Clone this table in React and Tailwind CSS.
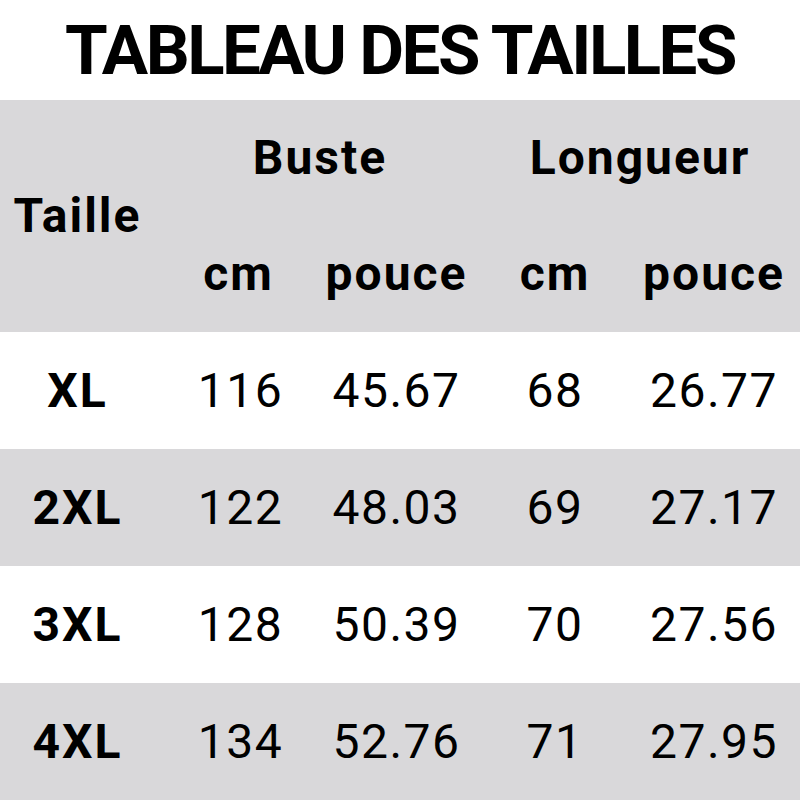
const rows = [
  { size: "XL", bustCm: "116", bustIn: "45.67", lenCm: "68", lenIn: "26.77" },
  { size: "2XL", bustCm: "122", bustIn: "48.03", lenCm: "69", lenIn: "27.17" },
  { size: "3XL", bustCm: "128", bustIn: "50.39", lenCm: "70", lenIn: "27.56" },
  { size: "4XL", bustCm: "134", bustIn: "52.76", lenCm: "71", lenIn: "27.95" },
];

const cols = "grid grid-cols-[155px_163px_157px_160px_158px]";

export default function App() {
  return (
    <div
      className="w-[800px] h-[800px] bg-white text-black overflow-hidden"
      style={{ fontFamily: "Roboto, 'Liberation Sans', sans-serif" }}
    >
      {/* Title */}
      <div className="h-[100px] flex items-center justify-center">
        <h1 className="text-[69px] font-bold leading-none tracking-[-2.5px]">TABLEAU DES TAILLES</h1>
      </div>

      {/* Header */}
      <div className={`${cols} h-[232px] bg-[#d9d8da] font-bold text-[48px] leading-none tracking-[2px]`}>
        <div className="row-span-2 flex items-center justify-center">Taille</div>
        <div className="col-span-2 flex items-center justify-center pl-[10px]">Buste</div>
        <div className="col-span-2 flex items-center justify-center pl-[12px]">Longueur</div>
        <div className="flex items-center justify-center pl-[4px]">cm</div>
        <div className="flex items-center justify-center">pouce</div>
        <div className="flex items-center justify-center">cm</div>
        <div className="flex items-center justify-center">pouce</div>
      </div>

      {/* Rows */}
      {rows.map((r, i) => (
        <div
          key={r.size}
          className={`${cols} h-[117px] text-[48px] leading-none tracking-[1.5px] ${i % 2 === 1 ? "bg-[#d9d8da]" : "bg-white"}`}
        >
          <div className="flex items-center justify-center font-bold tracking-[2px]">{r.size}</div>
          <div className="flex items-center justify-center pl-[8px]">{r.bustCm}</div>
          <div className="flex items-center justify-center">{r.bustIn}</div>
          <div className="flex items-center justify-center">{r.lenCm}</div>
          <div className="flex items-center justify-center">{r.lenIn}</div>
        </div>
      ))}
    </div>
  );
}
